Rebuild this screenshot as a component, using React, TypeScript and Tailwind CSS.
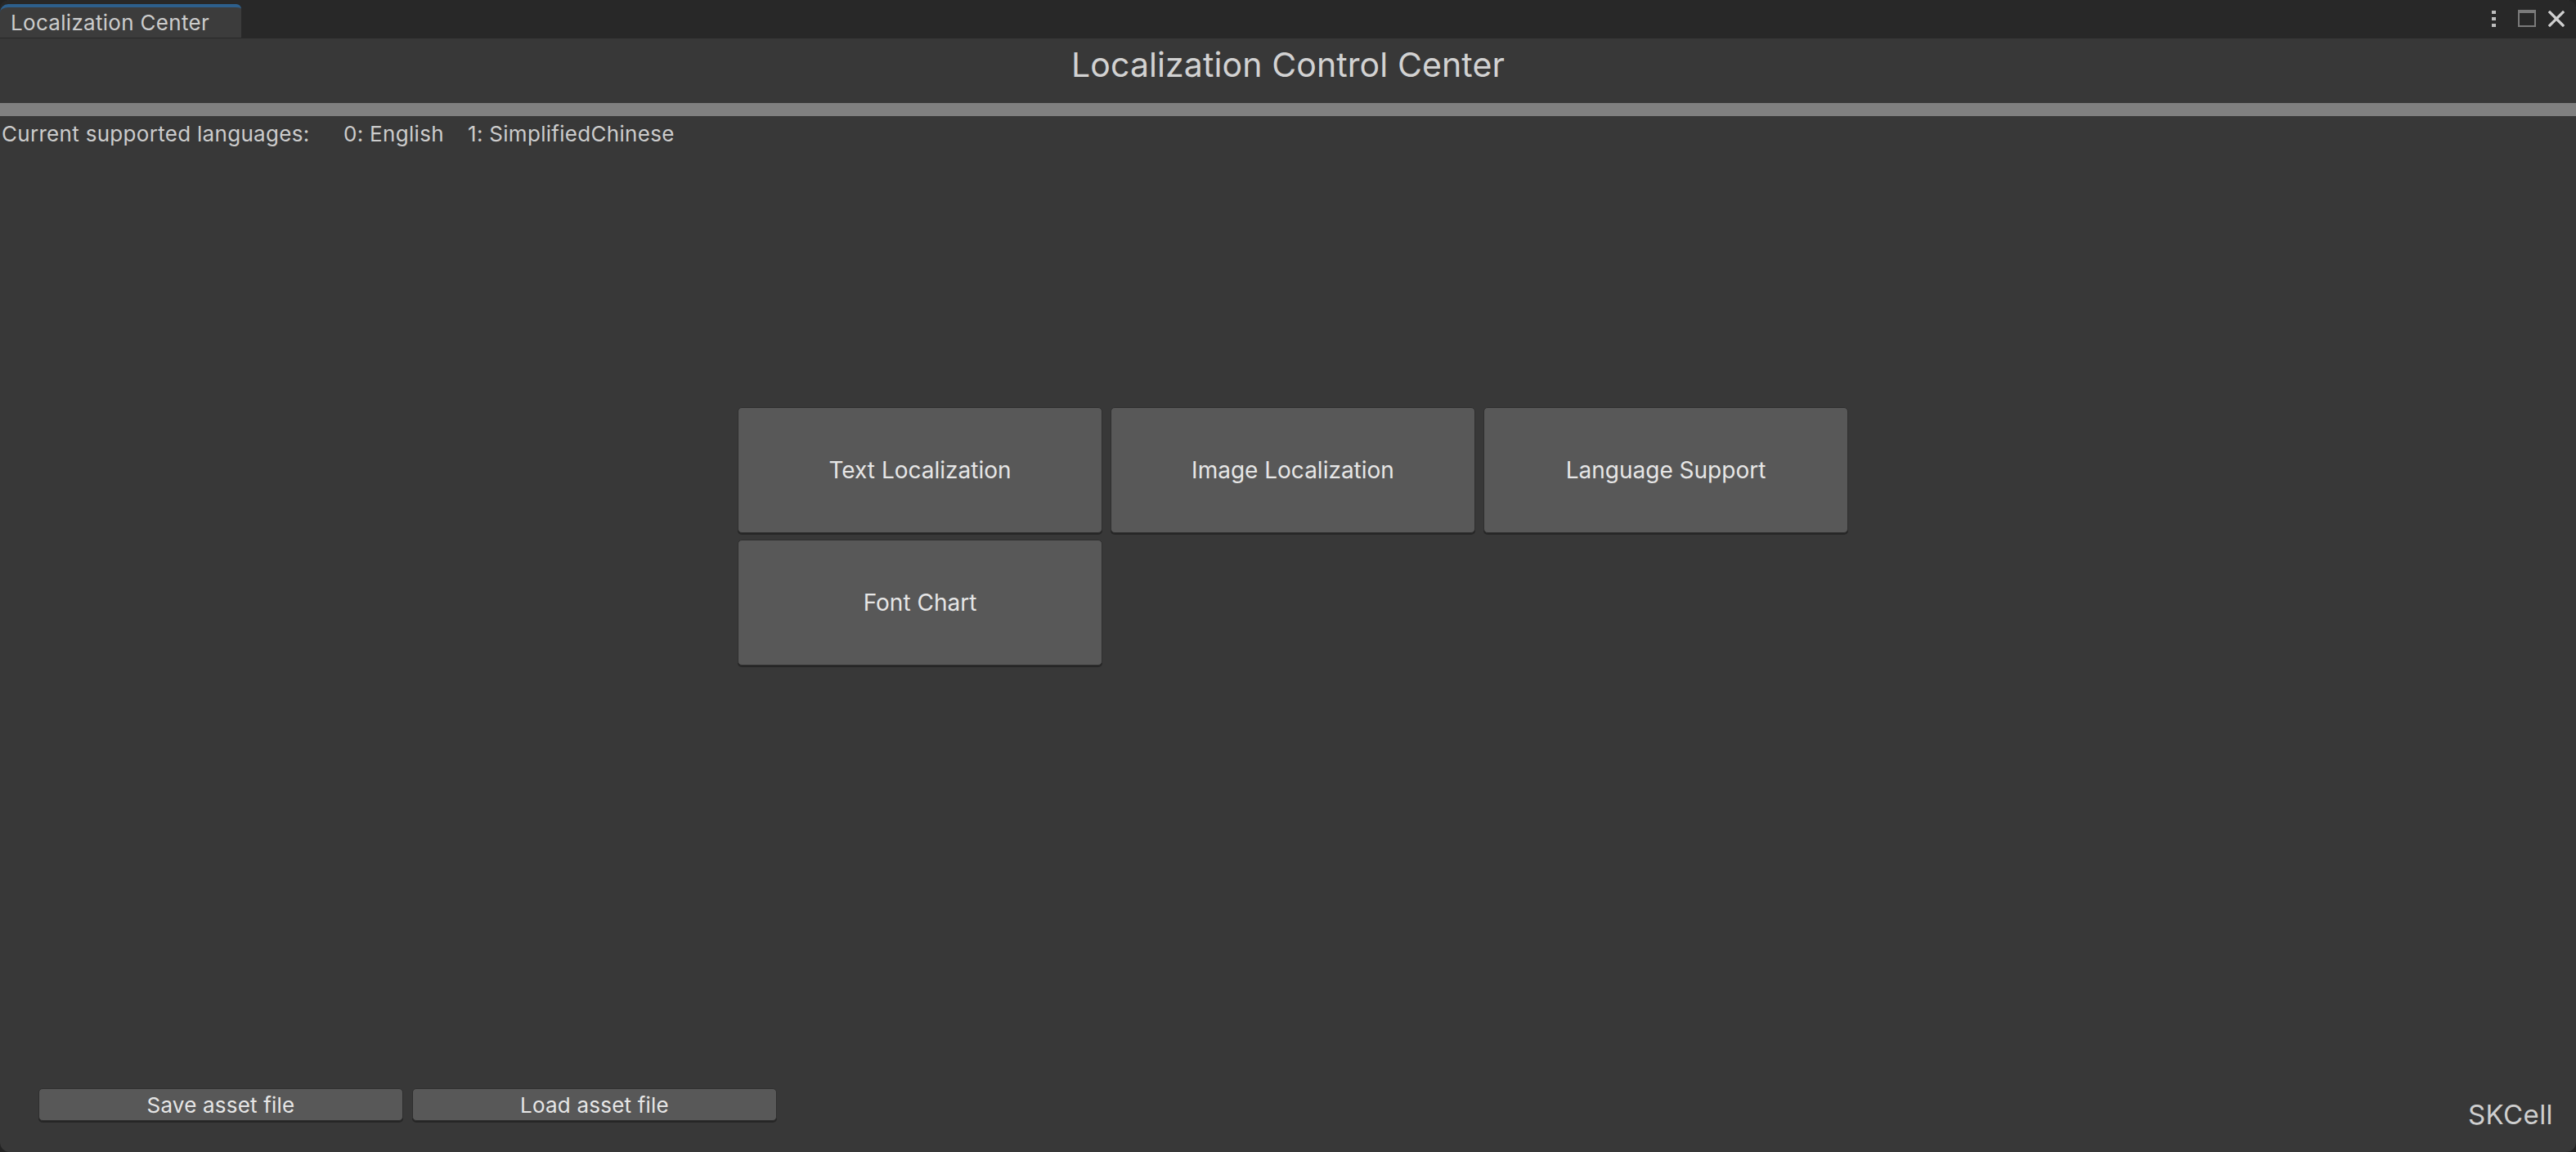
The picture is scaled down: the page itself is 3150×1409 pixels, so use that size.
import React from 'react';

// Unity-style editor window: Localization Control Center

const font = { fontFamily: 'Inter, "Noto Sans", "Liberation Sans", sans-serif' };

const BigButton = ({ label }: { label: string }) => (
    <button className="w-[446px] h-[154px] bg-[#585858] rounded-[5px] border border-[#2f2f2f] shadow-[0_2px_0_#262626] text-[28px] text-[#e6e6e6] flex items-center justify-center">
        {label}
    </button>
);

const SmallButton = ({ label }: { label: string }) => (
    <button className="w-[446px] h-[40px] bg-[#585858] rounded-[5px] border border-[#2f2f2f] shadow-[0_2px_0_#262626] text-[26px] tracking-[0.2px] text-[#e6e6e6] flex items-center justify-center">
        {label}
    </button>
);

export default function App() {
    return (
        <div className="w-[3150px] h-[1409px] bg-[#232323]" style={font}>
            <div className="w-full h-full bg-[#383838] rounded-[12px] overflow-hidden flex flex-col">
                {/* Title bar with tab */}
                <div className="h-[47px] bg-[#282828] flex justify-between items-start shrink-0">
                    <div className="mt-[5px] w-[295px] h-[41px] bg-[#3c3c3c] border-t-[4px] border-[#2d5f8c] rounded-tr-[6px] rounded-tl-[10px] pl-[13px] text-[26px] leading-[37px] tracking-[0.3px] text-[#cccccc]">
                        Localization Center
                    </div>
                    <div className="h-full flex items-center pr-[14px] pb-[2px]">
                        <div className="flex flex-col gap-[4px] w-[5px]">
                            <span className="block w-[5px] h-[4px] bg-[#bdbdbd]" />
                            <span className="block w-[5px] h-[4px] bg-[#bdbdbd]" />
                            <span className="block w-[5px] h-[4px] bg-[#bdbdbd]" />
                        </div>
                        <div className="ml-[27px] w-[22px] h-[21px] border-2 border-t-[4px] border-[#7a7a7a]" />
                        <svg className="ml-[15px]" width="20" height="20" viewBox="0 0 20 20">
                            <path d="M2 2 L18 18 M18 2 L2 18" stroke="#cfcfcf" strokeWidth="3.2" strokeLinecap="square" />
                        </svg>
                    </div>
                </div>

                {/* Header */}
                <div className="h-[79px] pt-[7px] text-center text-[41px] leading-[50px] tracking-[0.1px] text-[#d2d2d2] shrink-0">
                    Localization Control Center
                </div>
                <div className="h-[16px] bg-[#808080] shrink-0" />

                {/* Supported languages */}
                <div className="mt-[6px] pl-[2px] flex text-[26px] leading-[32px] tracking-[0.3px] text-[#cccccc] shrink-0">
                    <span className="w-[418px]">Current supported languages:</span>
                    <span className="w-[152px]">0: English</span>
                    <span>1: SimplifiedChinese</span>
                </div>

                {/* Main tools */}
                <div className="mt-[318px] pl-[902px] grid grid-cols-[446px_446px_446px] gap-x-[10px] gap-y-[8px] shrink-0">
                    <BigButton label="Text Localization" />
                    <BigButton label="Image Localization" />
                    <BigButton label="Language Support" />
                    <BigButton label="Font Chart" />
                </div>

                <div className="flex-1" />

                {/* Footer */}
                <div className="h-[78px] flex justify-between items-start shrink-0">
                    <div className="pl-[47px] flex gap-[11px]">
                        <SmallButton label="Save asset file" />
                        <SmallButton label="Load asset file" />
                    </div>
                    <div className="mt-[12px] pr-[28px] text-[33px] leading-[40px] tracking-[0.4px] text-[#cfcfcf]">SKCell</div>
                </div>
            </div>
        </div>
    );
}
